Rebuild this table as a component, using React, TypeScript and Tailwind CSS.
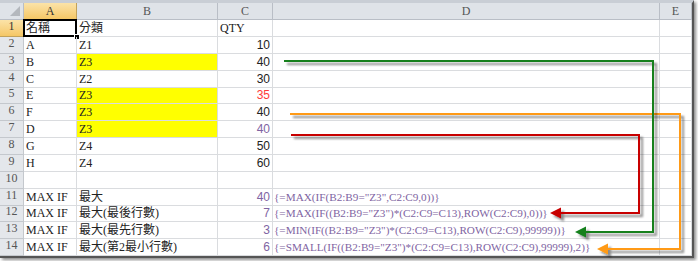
import React from "react"

type Row = {
  n: number
  a?: string
  b?: string
  c?: string
  cText?: boolean
  cColor?: string
  d?: string
  yellow?: boolean
  h: string
}

const rows: Row[] = [
  { n: 1, a: "名稱", b: "分類", c: "QTY", cText: true, h: "h-[17px]" },
  { n: 2, a: "A", b: "Z1", c: "10", h: "h-[17px]" },
  { n: 3, a: "B", b: "Z3", c: "40", yellow: true, h: "h-[17px]" },
  { n: 4, a: "C", b: "Z2", c: "30", h: "h-[17px]" },
  { n: 5, a: "E", b: "Z3", c: "35", cColor: "text-[#ff3b3b]", yellow: true, h: "h-[16px]" },
  { n: 6, a: "F", b: "Z3", c: "40", yellow: true, h: "h-[17px]" },
  { n: 7, a: "D", b: "Z3", c: "40", cColor: "text-[#8064a2]", yellow: true, h: "h-[17px]" },
  { n: 8, a: "G", b: "Z4", c: "50", h: "h-[17px]" },
  { n: 9, a: "H", b: "Z4", c: "60", h: "h-[17px]" },
  { n: 10, h: "h-[17px]" },
  { n: 11, a: "MAX IF", b: "最大", c: "40", cColor: "text-[#8064a2]", d: '{=MAX(IF(B2:B9="Z3",C2:C9,0))}', h: "h-[17px]" },
  { n: 12, a: "MAX IF", b: "最大(最後行數)", c: "7", cColor: "text-[#8064a2]", d: '{=MAX(IF((B2:B9="Z3")*(C2:C9=C13),ROW(C2:C9),0))}', h: "h-[16px]" },
  { n: 13, a: "MAX IF", b: "最大(最先行數)", c: "3", cColor: "text-[#8064a2]", d: '{=MIN(IF((B2:B9="Z3")*(C2:C9=C13),ROW(C2:C9),99999))}', h: "h-[17px]" },
  { n: 14, a: "MAX IF", b: "最大(第2最小行數)", c: "6", cColor: "text-[#8064a2]", d: '{=SMALL(IF((B2:B9="Z3")*(C2:C9=C13),ROW(C2:C9),99999),2)}', h: "h-[17px]" },
]

const serif = "font-['Liberation_Serif','Noto_Sans_CJK_TC',serif]"
const cell = "border-r border-b border-[#dadcdf] flex items-end overflow-visible whitespace-nowrap"

function Arrows() {
  return (
    <svg className="absolute left-0 top-0 pointer-events-none" width="698" height="261">
      <defs>
        <filter id="sh" x="-10%" y="-10%" width="130%" height="130%">
          <feDropShadow dx="3" dy="3" stdDeviation="1.2" floodColor="#000" floodOpacity="0.45" />
        </filter>
      </defs>
      <g filter="url(#sh)">
        <path d="M290 114 H680 V249 H606" fill="none" stroke="#ff9a14" strokeWidth="2" />
        <polygon points="597,249 608,243.5 608,254.5" fill="#ff9a14" />
      </g>
      <g filter="url(#sh)">
        <path d="M291 135 H639 V213 H559" fill="none" stroke="#c80000" strokeWidth="2" />
        <polygon points="550,213 561,207.5 561,218.5" fill="#c80000" />
      </g>
      <g filter="url(#sh)">
        <path d="M284 61 H653 V232 H584" fill="none" stroke="#13801a" strokeWidth="2" />
        <polygon points="575,232 586,226.5 586,237.5" fill="#13801a" />
      </g>
    </svg>
  )
}

export default function App() {
  return (
    <div className="relative w-[698px] h-[261px] bg-white overflow-hidden">
      <div className="w-[694px] border-t-[3px] border-t-[#c9ced5] border-r-2 border-b-2 border-r-[#555] border-b-[#555] shadow-[2px_2px_3px_rgba(0,0,0,0.45)]">
        <div className="grid grid-cols-[24px_53px_141px_55px_387px_32px]">
          {/* column headers */}
          <div className="h-[17px] bg-[#dfe3e8] border-r border-b border-[#b9bec6] relative">
            <div className="absolute right-[3px] bottom-[3px] w-0 h-0 border-l-[10px] border-l-transparent border-b-[10px] border-b-[#b4b8bd]" />
          </div>
          {["A", "B", "C", "D", "E"].map((l, i) => (
            <div
              key={l}
              className={`h-[17px] flex items-center justify-center text-[12px] ${serif} border-r border-b ${
                i === 0
                  ? "bg-gradient-to-b from-[#fbe3a8] to-[#f5c765] border-[#c2a25a] text-[#333]"
                  : "bg-[#dfe3e8] border-[#b9bec6] text-[#555]"
              }`}
            >
              {l}
            </div>
          ))}

          {rows.map((r) => (
            <React.Fragment key={r.n}>
              <div
                className={`${r.h} flex items-end justify-center pb-[1px] text-[12px] ${serif} border-r border-b ${
                  r.n === 1
                    ? "bg-gradient-to-b from-[#fbe3a8] to-[#f5c765] border-[#c2a25a] text-[#333]"
                    : "bg-[#e4e7eb] border-[#c4c8cd] text-[#555]"
                }`}
              >
                {r.n}
              </div>
              <div className={`${r.h} ${cell} relative pl-[2px] text-[12px] ${serif} text-[#222]`}>
                <span className="leading-[15px]">{r.a}</span>
                {r.n === 1 && (
                  <>
                    <div className="absolute left-[-1px] top-[-1px] w-[54px] h-[18px] border-2 border-black" />
                    <div className="absolute right-[-4px] bottom-[-4px] w-[6px] h-[6px] bg-black border border-white" />
                  </>
                )}
              </div>
              <div className={`${r.h} ${cell} pl-[2px] text-[12px] ${serif} text-[#222] ${r.yellow ? "bg-[#ffff00]" : ""}`}>
                <span className="leading-[15px]">{r.b}</span>
              </div>
              <div
                className={`${r.h} ${cell} px-[2px] text-[12px] ${
                  r.cText ? `${serif} justify-start` : "font-['Liberation_Sans',sans-serif] justify-end"
                } ${r.cColor ?? "text-[#222]"}`}
              >
                <span className="leading-[15px]">{r.c}</span>
              </div>
              <div className={`${r.h} ${cell} pl-[1px] text-[11.2px] ${serif} text-[#8064a2]`}>
                <span className="leading-[15px]">{r.d}</span>
              </div>
              <div className={`${r.h} ${cell}`} />
            </React.Fragment>
          ))}
        </div>
      </div>
      <Arrows />
    </div>
  )
}
